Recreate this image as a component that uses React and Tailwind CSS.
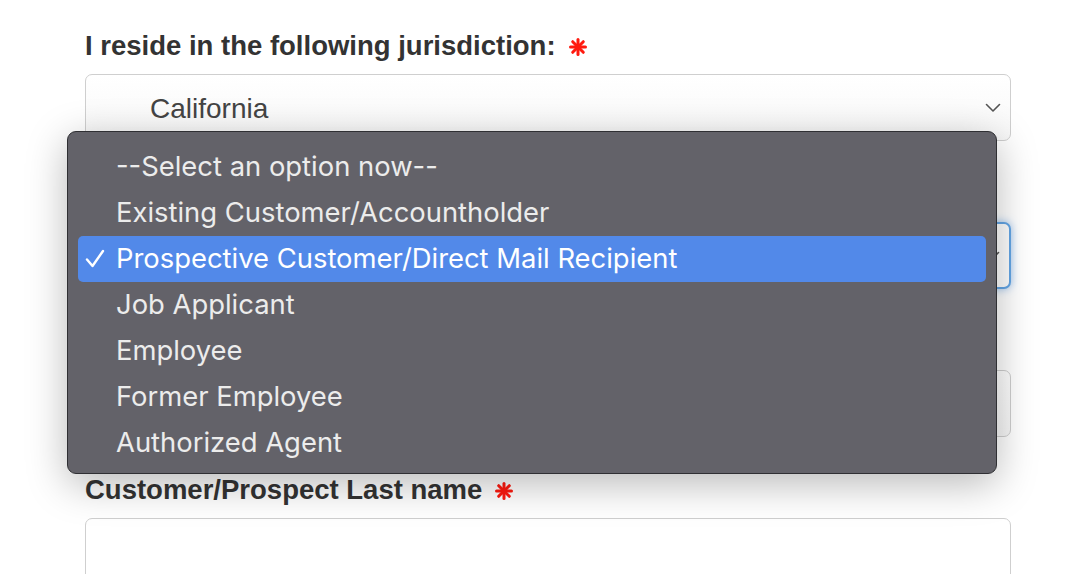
import React from 'react';

const labelCls = "flex items-center h-[40px] text-[27.5px] font-bold text-[#333] mb-2";
const fieldCls = "h-[67px] w-full rounded-[7px] border border-[#cfcfcf] bg-gradient-to-b from-white to-[#f8f8f8] flex items-center";

const Star = () => (
  <svg width="18" height="18" viewBox="0 0 18 18" className="ml-[13px] mt-[2px]">
    <g stroke="#ff1a0f" strokeWidth="3" strokeLinecap="round">
      <line x1="9" y1="1.5" x2="9" y2="16.5" />
      <line x1="1.5" y1="9" x2="16.5" y2="9" />
      <line x1="3.7" y1="3.7" x2="14.3" y2="14.3" />
      <line x1="14.3" y1="3.7" x2="3.7" y2="14.3" />
    </g>
  </svg>
);

const Chevron = () => (
  <svg width="16" height="10" viewBox="0 0 16 10" className="ml-auto mr-[9px]">
    <path d="M1.5 1.5 L8 8 L14.5 1.5" fill="none" stroke="#555" strokeWidth="1.6" strokeLinecap="round" strokeLinejoin="round" />
  </svg>
);

const options = [
  '--Select an option now--',
  'Existing Customer/Accountholder',
  'Prospective Customer/Direct Mail Recipient',
  'Job Applicant',
  'Employee',
  'Former Employee',
  'Authorized Agent',
];

export default function App() {
  return (
    <div className="relative w-[1078px] h-[574px] overflow-hidden bg-white" style={{ fontFamily: '"Liberation Sans", Arial, sans-serif' }}>
      <div className="pl-[85px] pt-[26px] w-[1011px]">
        <div className={labelCls}>I reside in the following jurisdiction:<Star /></div>
        <div className={fieldCls + " mb-[33px]"}>
          <span className="pl-[64px] pt-[3px] text-[28px] text-[#444]">California</span>
          <Chevron />
        </div>

        {/* label hidden under the open menu */}
        <div className="h-[40px] mb-2" />
        <div className="h-[67px] w-full rounded-[7px] border-2 border-[#64a6e6] shadow-[0_0_8px_rgba(82,152,230,0.6)] bg-white flex items-center mb-[33px]">
          <Chevron />
        </div>

        <div className="h-[40px] mb-2" />
        <div className={fieldCls + " mb-[33px]"}></div>

        <div className={labelCls}>Customer/Prospect Last name<Star /></div>
        <div className="h-[67px] w-full rounded-[7px] border border-[#cfcfcf] bg-white"></div>
      </div>

      {/* open native select menu */}
      <div
        className="absolute left-[67px] top-[131px] w-[930px] h-[343px] rounded-[9px] border border-[#2f2f33] bg-[#636269] shadow-[0_10px_40px_rgba(0,0,0,0.28)] pt-[12px] px-[10px]"
        style={{ fontFamily: 'Inter, "Noto Sans", sans-serif' }}
      >
        {options.map((o, i) => {
          const sel = i === 2;
          return (
            <div
              key={o}
              className={
                "relative h-[46px] flex items-center pl-[38px] text-[27.4px] rounded-[5px] " +
                (sel ? "bg-[#5289e9] text-white" : "text-[#ececec]")
              }
            >
              {sel && (
                <svg width="20" height="20" viewBox="0 0 20 20" className="absolute left-[7px] top-[13px]">
                  <path d="M2 10.5 L7.5 17 L18 2" fill="none" stroke="white" strokeWidth="2.4" strokeLinecap="round" strokeLinejoin="round" />
                </svg>
              )}
              {o}
            </div>
          );
        })}
      </div>
    </div>
  );
}
